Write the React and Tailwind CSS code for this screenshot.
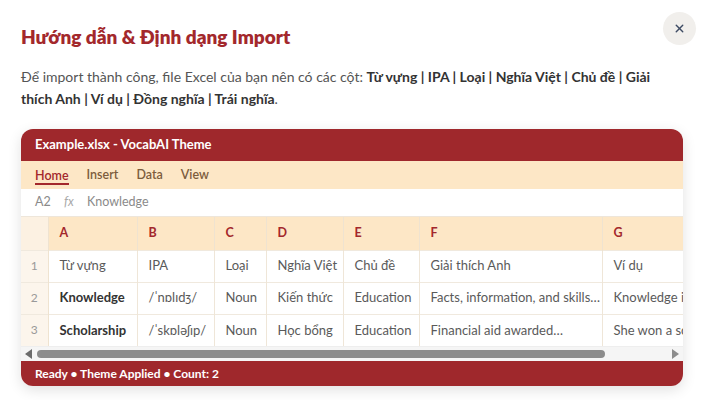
import React from 'react';
import { X } from 'lucide-react';

const columns = [
  { key: 'A', width: 89 },
  { key: 'B', width: 77 },
  { key: 'C', width: 52 },
  { key: 'D', width: 77 },
  { key: 'E', width: 76 },
  { key: 'F', width: 183 },
  { key: 'G', width: 150 },
];

const rows = [
  ['Từ vựng', 'IPA', 'Loại', 'Nghĩa Việt', 'Chủ đề', 'Giải thích Anh', 'Ví dụ'],
  ['Knowledge', '/ˈnɒlɪdʒ/', 'Noun', 'Kiến thức', 'Education', 'Facts, information, and skills…', 'Knowledge is power'],
  ['Scholarship', '/ˈskɒləʃɪp/', 'Noun', 'Học bổng', 'Education', 'Financial aid awarded…', 'She won a scholarship'],
];

const App = () => {
  return (
    <div
      className="w-[707px] h-[400px] overflow-hidden bg-white relative"
      style={{ fontFamily: 'Lato, "Noto Sans", sans-serif' }}
    >
      {/* Close button */}
      <button className="absolute top-[12px] left-[663px] w-[33px] h-[33px] rounded-full bg-[#f1efec] flex items-center justify-center text-[#3d4a63]">
        <X size={13} strokeWidth={2.5} />
      </button>

      <div className="pl-[21px] pt-[24px]">
        <h2 className="text-[19px] leading-[26px] font-extrabold text-[#a3282c]">
          Hướng dẫn &amp; Định dạng Import
        </h2>
        <p className="mt-[16px] w-[660px] text-[14px] leading-[22px] text-[#555]">
          Để import thành công, file Excel của bạn nên có các cột:{' '}
          <b className="text-[#333]">
            Từ vựng | IPA | Loại | Nghĩa Việt | Chủ đề | Giải thích Anh | Ví dụ | Đồng nghĩa | Trái nghĩa
          </b>
          .
        </p>

        {/* Spreadsheet card */}
        <div className="mt-[19px] w-[662px] rounded-[12px] overflow-hidden shadow-[0_4px_14px_rgba(0,0,0,0.12)]">
          <div className="h-[32px] bg-[#9f282c] px-[14px] flex items-center text-white text-[13px] font-bold">
            Example.xlsx - VocabAI Theme
          </div>
          <div className="h-[28px] bg-[#fde7c6] px-[14px] flex items-center gap-[18px] text-[12.5px] font-semibold text-[#7c5c3c]">
            <span className="text-[#a3282c] border-b-2 border-[#a3282c] leading-[15px] mt-[2px]">Home</span>
            <span>Insert</span>
            <span>Data</span>
            <span>View</span>
          </div>
          <div className="h-[28px] bg-white px-[14px] flex items-center text-[12.5px] text-[#8a8a8a] border-b border-[#eee6da]">
            <span className="w-[29px]">A2</span>
            <span className="w-[23px] italic text-[#aaa]">fx</span>
            <span>Knowledge</span>
          </div>

          <div className="overflow-hidden">
            <table className="border-collapse table-fixed w-[731px] text-[13px]">
              <colgroup>
                <col style={{ width: 27 }} />
                {columns.map((c) => (
                  <col key={c.key} style={{ width: c.width }} />
                ))}
              </colgroup>
              <thead>
                <tr className="h-[33px] bg-[#fde7c6]">
                  <th className="bg-[#fcf1e2] border-r border-[#efe3d0]" />
                  {columns.map((c) => (
                    <th
                      key={c.key}
                      className="text-left pl-[11px] font-bold text-[12.5px] text-[#a3282c] border-r border-[#efe3d0]"
                    >
                      {c.key}
                    </th>
                  ))}
                </tr>
              </thead>
              <tbody>
                {rows.map((r, i) => (
                  <tr key={i} className="h-[32px] border-t border-[#f0e9de]">
                    <td className="bg-[#fcf5ec] text-center text-[12px] text-[#999] border-r border-[#efe3d0]">
                      {i + 1}
                    </td>
                    {r.map((cell, j) => (
                      <td
                        key={j}
                        className={
                          'pl-[11px] whitespace-nowrap overflow-hidden border-r border-[#efe6d8] ' +
                          (j === 0 && i > 0 ? 'font-bold text-[#333]' : 'text-[#5a5a5a]')
                        }
                      >
                        {cell}
                      </td>
                    ))}
                  </tr>
                ))}
              </tbody>
            </table>
          </div>

          {/* Horizontal scrollbar */}
          <div className="h-[15px] bg-[#f5f5f5] border-t border-[#eee] flex items-center px-[4px] gap-[4px]">
            <svg width="8" height="10" viewBox="0 0 8 10">
              <path d="M7 0 L0 5 L7 10 Z" fill="#6b6b6b" />
            </svg>
            <div className="w-[568px] h-[8px] rounded-full bg-[#8c8c8c]" />
            <div className="flex-1" />
            <svg width="8" height="10" viewBox="0 0 8 10">
              <path d="M1 0 L8 5 L1 10 Z" fill="#8c8c8c" />
            </svg>
          </div>

          <div className="h-[25px] bg-[#9f282c] px-[14px] flex items-center text-white text-[12px] font-bold">
            Ready • Theme Applied • Count: 2
          </div>
        </div>
      </div>
    </div>
  );
};

export default App;
